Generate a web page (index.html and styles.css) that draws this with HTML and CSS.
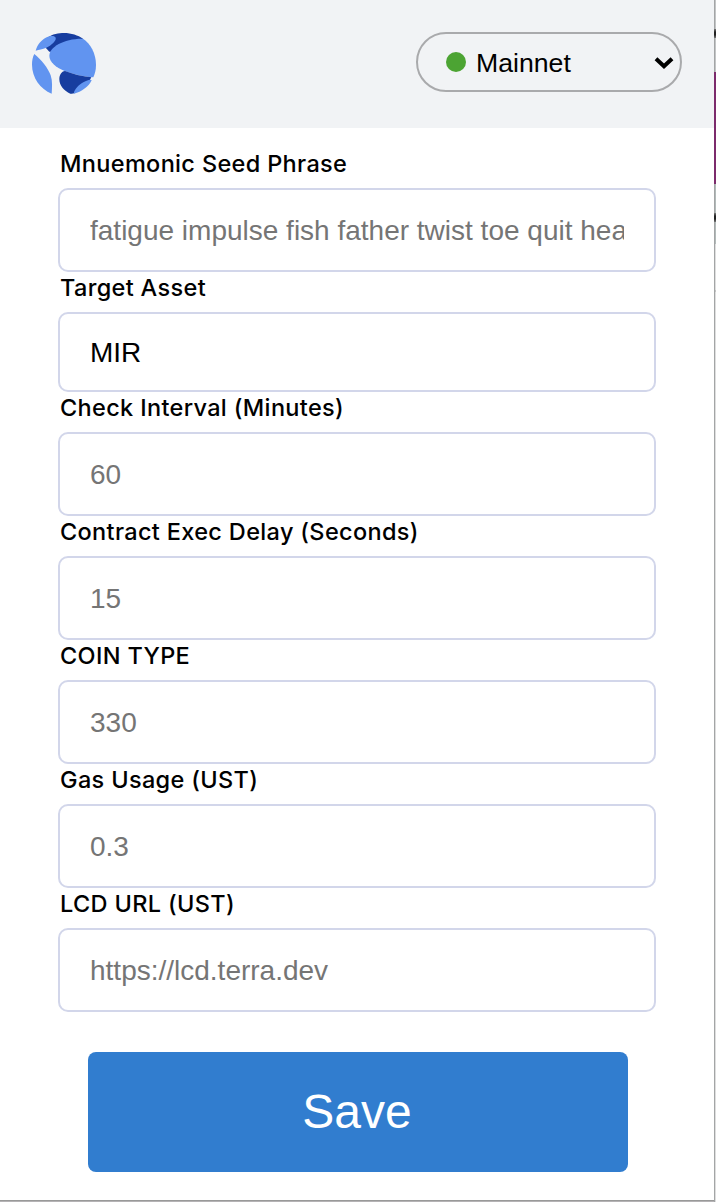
FILE: index.html
```html
<!DOCTYPE html>
<html lang="en">
<head>
<meta charset="utf-8">
<title>Settings</title>
<link rel="stylesheet" href="styles.css">
</head>
<body>
<div class="popup">
  <header class="header">
    <svg class="logo" viewBox="36 27 192 183" aria-label="Terra">
      <path fill="#173d9f" d="M80 43C98 29 116 27 132 27C154 27 174 34 189 44L184 52L110 84L88 83L77 71Z"/>
      <path fill="#6194f0" d="M47 80C52 62 65 47 80 40C91 35 104 34 107 41C110 50 94 64 79 71C67 76 57 77 47 80Z"/>
      <path fill="#6194f0" d="M189 44C211 58 228 88 228 123C228 137 225 149 220 160C185 157 158 150 134 141C107 129 88 114 88 95C88 69 132 43 189 44Z"/>
      <path fill="#6194f0" d="M43 90C64 107 84 132 92 154C98 172 96 191 95 209C61 195 36 161 36 122C36 110 38 99 43 90Z"/>
      <path fill="#173d9f" d="M135 141C158 150 185 157 214 160L210 167L163 208Q157 210 151 209C132 201 118 184 118 166C118 153 124 142 135 141Z"/>
      <path fill="#6194f0" d="M215 169C207 187 184 204 162 209C160 201 172 186 186 177C198 170 213 164 215 169Z"/>
    </svg>
    <div class="network">
      <span class="dot"></span>
      <span class="network-name">Mainnet</span>
      <svg class="chevron" viewBox="0 0 20 14"><path d="M2 2.8L10 10.3L18 2.8"/></svg>
    </div>
  </header>
  <form class="form">
    <label class="label" for="seed">Mnuemonic Seed Phrase</label>
    <input class="field" id="seed" placeholder="fatigue impulse fish father twist toe quit health">
    <label class="label" for="asset">Target Asset</label>
    <select class="field select" id="asset"><option>MIR</option></select>
    <label class="label" for="interval">Check Interval (Minutes)</label>
    <input class="field" id="interval" placeholder="60">
    <label class="label" for="delay">Contract Exec Delay (Seconds)</label>
    <input class="field" id="delay" placeholder="15">
    <label class="label" for="coin">COIN TYPE</label>
    <input class="field" id="coin" placeholder="330">
    <label class="label" for="gas">Gas Usage (UST)</label>
    <input class="field" id="gas" placeholder="0.3">
    <label class="label" for="lcd">LCD URL (UST)</label>
    <input class="field" id="lcd" placeholder="https://lcd.terra.dev">
    <button class="save" type="button">Save</button>
  </form>
</div>
<div class="edge">
  <div class="strip top"><i class="speck"></i></div>
  <div class="strip purple"></div>
  <div class="strip mid"><i class="speck"></i></div>
  <div class="strip pale"></div>
  <div class="strip rest"></div>
</div>
</body>
</html>
```
FILE: styles.css
```css
* { box-sizing: border-box; }
body {
  margin: 0;
  height: 1202px;
  overflow: hidden;
  display: grid;
  grid-template-columns: 714px 2px;
  background: #b5b3b5;
  font-family: "Liberation Sans", Arial, sans-serif;
}
.popup {
  height: 1200px;
  background: #fff;
  box-shadow: 0 1px 0 #999;
}
.header {
  height: 128px;
  padding: 32px 32px 0;
  display: flex;
  justify-content: space-between;
  align-items: flex-start;
  background: #f1f3f5;
}
.logo { width: 64px; height: 61px; margin-top: 1px; }
.network {
  width: 266px;
  height: 60px;
  padding: 0 6px 0 28px;
  display: flex;
  align-items: center;
  border: 2px solid #a9aaac;
  border-radius: 30px;
}
.dot { width: 20px; height: 20px; border-radius: 50%; background: #4ca433; }
.network-name { margin-left: 10px; padding-top: 2px; font-size: 26.67px; line-height: 32px; }
.chevron { width: 20px; height: 14px; margin: 1px 0 0 auto; }
.chevron path { fill: none; stroke: #000; stroke-width: 4; }
.form {
  padding: 20px 58px 0;
  display: flex;
  flex-direction: column;
}
.label {
  height: 40px;
  padding-left: 2px;
  font: 500 23.5px/32px Inter, sans-serif;
  letter-spacing: 0.34px;
  color: #000;
}
.field {
  width: 598px;
  height: 84px;
  margin: 0;
  padding: 2px 30px 0;
  border: 2px solid #d2d6ea;
  border-radius: 10px;
  background: #fff;
  color: #000;
  font: 28px "Liberation Sans", Arial, sans-serif;
}
.field::placeholder { color: #757575; opacity: 1; }
.select { height: 80px; padding-top: 0; appearance: none; }
.save {
  width: 540px;
  height: 120px;
  margin: 40px 0 0 30px;
  padding: 0 2px 2px 0;
  border: 0;
  border-radius: 8px;
  background: #317dcf;
  color: #fff;
  font: 48px "Liberation Sans", Arial, sans-serif;
}
.edge { height: 1202px; display: flex; flex-direction: column; border-left: 1px solid #a3a5a6; }
.strip { display: flex; flex-direction: column; }
.top { height: 72px; padding-top: 29px; background: #c3c5c6; }
.purple { height: 112px; margin-left: -1px; background: #7c2b6c; }
.mid { height: 60px; padding-top: 29px; background: #b2bab9; }
.pale { height: 48px; background: #dedede; border-bottom: 2px solid #c3c3c3; }
.rest { flex: 1; background: #dedede; }
.speck {
  height: 9px;
  margin-left: -1px;
  background: linear-gradient(#777, #222 35%, #222 65%, #777);
}
```
